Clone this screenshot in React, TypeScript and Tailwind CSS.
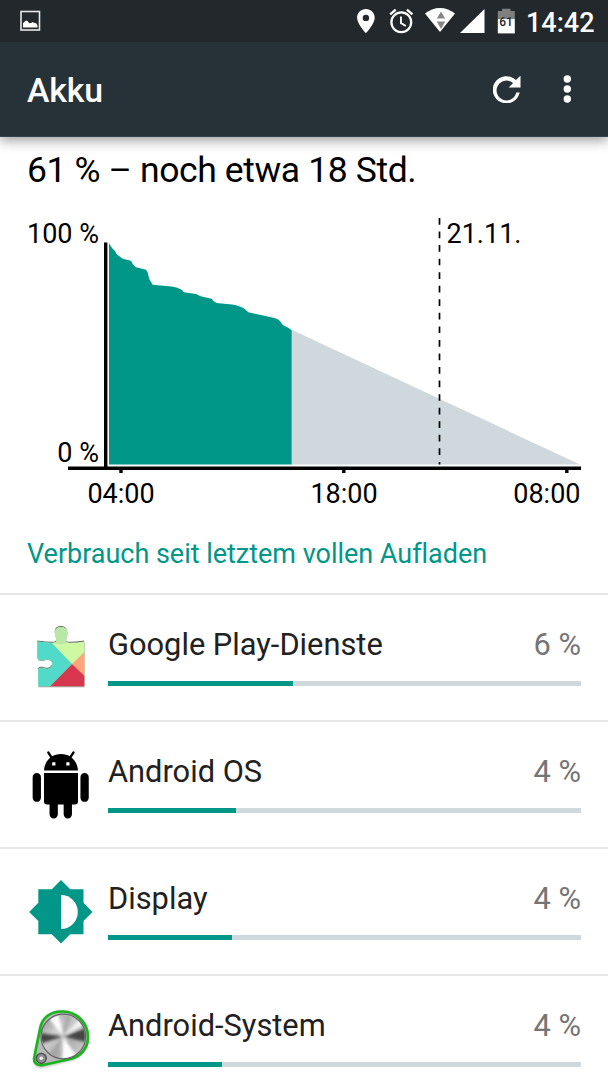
import type { ReactNode } from 'react';

interface UsageItem {
  name: string;
  percent: string;
  barWidth: number;
  icon: ReactNode;
}

const ImageIcon = () => (
  <svg viewBox="0 0 22 22" className="h-[22px] w-[22px]">
    <rect x="1" y="1.500" width="18.500" height="18.500" fill="none" stroke="#e8e8e8" strokeWidth="1.600" />
    <path d="M3 17.500v-4.500L6 10.500l1.500.6 1.800 2.200 1.700-.4 1.700-.9 1.600 1 1.900.3 1.300 2.200v2z" fill="#fff" />
  </svg>
);

const StatusIcons = () => (
  <svg viewBox="0 0 170 42" className="h-[42px] w-[170px]">
    <g fill="#fff">
      <path
        fillRule="evenodd"
        d="M15.900 9C11 9 7.100 12.900 7.100 17.800c0 6.300 8.800 15.400 8.800 15.400s8.800-9.100 8.800-15.400C24.700 12.900 20.800 9 15.900 9zm0 5.700a3.200 3.200 0 1 1 0 6.400 3.200 3.200 0 0 1 0-6.400z"
      />
      <path d="M75 13.600C79.400 10 84.500 8 90 8s10.600 2 15 5.600L90 32z" />
      <path d="M134.500 9v24h-24.500z" />
    </g>
    <g fill="none" stroke="#fff">
      <circle cx="51.300" cy="22.300" r="9.900" strokeWidth="2.300" />
      <path d="M51 16.500v6.600l4.800 2.900" strokeWidth="1.900" />
      <path d="M40.200 14.300l5.500-4.600M62.400 14.300l-5.500-4.600" strokeWidth="2.400" />
    </g>
    <path d="M91 11.500l4.200 7h-8.400zM91 29l-4.200-7.500h8.400z" fill="#858585" />
    <path d="M152 8.800h8.500V11h4.300v8h-17v-8h4.200z" fill="#7f7f7f" />
    <path d="M147.800 19h17v14.400h-17z" fill="#fff" />
    <text x="156" y="25.600" textAnchor="middle" fontSize="12" fontWeight="500" fill="#23282c">
      61
    </text>
  </svg>
);

const RefreshIcon = () => (
  <svg viewBox="0 0 28 28" className="h-7 w-7">
    <path
      d="M27.500.8v11.700H15.700l4.400-4.400a9.900 9.900 0 1 0 3.100 9.400h3.500A13.600 13.600 0 1 1 22.900 5.100z"
      fill="#fff"
    />
  </svg>
);

const PUZZLE =
  'M17.500 31q8.500 1.300 15 1.300c4 0 4.500-2 3.500-5-.8-2.500-1.200-4-1-6C35.300 18 37.500 16.500 41 16.500s5.800 1.500 6.300 4.800c.2 2-.2 3.500-1 6-1 3-.5 5 3.500 5q6.500 0 14.500-1.300V76H18.300V58.500c3-2.500 5-.8 8-.2 3.500 0 6-1.800 6-4.600s-2-5-5.500-5c-3 .6-5 2-8 .5-2-1-1.300-4-1.300-8z';

const PlayServicesIcon = () => (
  <svg viewBox="0 .5 90 90" className="h-[90px] w-[90px]">
    <defs>
      <clipPath id="puzzle">
        <path d={PUZZLE} />
      </clipPath>
    </defs>
    <path d={PUZZLE} fill="#666" transform="translate(-.2 -1)" />
    <path d={PUZZLE} fill="#999" transform="translate(.2 .8)" />
    <g clipPath="url(#puzzle)">
      <path d="M15 15h52v65H15z" fill="#cef9a2" />
      <path d="M34 15h15v17l-8 2-8-2z" fill="#b7e8a5" />
      <path d="M15 28h12.500L52 53.400 29.500 77H15z" fill="#51dac9" />
      <path d="M52 53.400L66 40v28z" fill="#ffa57b" />
      <path d="M52 53.400L66 67v10H29z" fill="#d7364f" />
    </g>
  </svg>
);

const AndroidIcon = () => (
  <svg viewBox="0 -2 90 90" className="h-[90px] w-[90px]">
    <path
      d="M24 30.500C24.500 21 31.500 14 41 14s16.500 7 17 16.500zM24 33h34v28.500a3 3 0 0 1-3 3H27a3 3 0 0 1-3-3z"
      fill="#000"
    />
    <g stroke="#000" strokeLinecap="round">
      <path d="M28.300 12.500l3.500 5.300M53.500 12.500L50 17.800" strokeWidth="2.300" />
      <path d="M16.800 37.200v20.500M64.600 37.200v20.500M33.700 60v14.300M47.800 60v14.300" strokeWidth="8.300" />
    </g>
    <path d="M32.200 22.200h3.200v3.200h-3.200zM46.300 22.200h3.200v3.200h-3.200z" fill="#fff" />
  </svg>
);

const DisplayIcon = () => (
  <svg viewBox="0 0 90 90" className="h-[90px] w-[90px]">
    <path
      d="M41 15l9.200 9.200h13.300v13.500L72.500 47l-9 9v13.300H50.200L41 78.500l-9.200-9.200H18.300V56L9.200 47l9.100-9.300V24.200h13.500z"
      fill="#009688"
    />
    <path d="M41 30c9.500 0 16.800 7.600 16.800 17S50.500 64 41 64z" fill="#fff" />
  </svg>
);

const SystemIcon = () => (
  <svg viewBox="0 -3 90 90" className="h-[90px] w-[90px]">
    <defs>
      <linearGradient id="steel" x1="0" y1="0" x2="1" y2="1">
        <stop offset="0" stopColor="#888" />
        <stop offset=".35" stopColor="#d0d0d0" />
        <stop offset=".65" stopColor="#b0b0b0" />
        <stop offset="1" stopColor="#d5d5d5" />
      </linearGradient>
      <filter id="soft" x="-20%" y="-20%" width="140%" height="140%">
        <feGaussianBlur stdDeviation="1.800" />
      </filter>
      <filter id="sheen" x="-20%" y="-20%" width="140%" height="140%">
        <feGaussianBlur stdDeviation="1.800" />
      </filter>
      <clipPath id="dial">
        <circle cx="43.300" cy="41.500" r="21.500" />
      </clipPath>
    </defs>
    <path
      d="M20.500 33C23 22 31 16 42 16a25.500 25.500 0 0 1 26 26c0 12-8 22-20 24l-25 6c-7 1-10-3-8.500-9z"
      fill="#666"
      opacity=".6"
      filter="url(#soft)"
    />
    <path
      d="M20.300 32.500C22.800 22 31 16.500 42 16.500a25.500 25.500 0 0 1 26 25.500c0 12-8 20.500-20 22.500L23 70c-7 1-10-3-8.500-9z"
      fill="#b8b8b8"
      stroke="#18b51c"
      strokeWidth="2.700"
    />
    <circle cx="43.300" cy="41.500" r="22.300" fill="url(#steel)" stroke="#646464" strokeWidth="1.200" />
    <g clipPath="url(#dial)">
      <g filter="url(#sheen)">
        <path d="M43 41.500L20 38v11zM43 41.500l25-9v15z" fill="#444" />
        <path d="M43 41.500L28 22l10-5zM43 41.500l-1 27 16-5z" fill="#fff" />
        <path d="M43 41.500L60 23l4 7z" fill="#f2f2f2" />
        <path d="M43 41.500L44 16l10 3zM43 41.500L28 60l7 5z" fill="#999" opacity=".6" />
      </g>
    </g>
    <circle cx="21.300" cy="63.300" r="5" fill="#8c8c8c" stroke="#4a4a4a" strokeWidth="1.300" />
    <circle cx="21.300" cy="63.300" r="1.800" fill="#eee" />
  </svg>
);

const items: UsageItem[] = [
  { name: 'Google Play-Dienste', percent: '6 %', barWidth: 185, icon: <PlayServicesIcon /> },
  { name: 'Android OS', percent: '4 %', barWidth: 128, icon: <AndroidIcon /> },
  { name: 'Display', percent: '4 %', barWidth: 123.500, icon: <DisplayIcon /> },
  { name: 'Android-System', percent: '4 %', barWidth: 114, icon: <SystemIcon /> },
];

const BatteryChart = () => (
  <svg viewBox="0 205 608 310" className="block h-[310px] w-full" fontSize="27">
    <path d="M291.700 329.800L580 464.600H291.700z" fill="#cfd8dc" />
    <path
      d="M109 464.600V243.300L112 248 115 251 116.700 254.300 122.700 258.700 131 260.700 133 264.500 136 267.300 146 269.700 147.500 272 149.300 279 152.700 284.700 171.700 286.500Q178 287.300 181.700 289.700L184 292.300 196 294 200.700 296.300 211.700 298.700 213.500 301 216.500 303 232 304.500Q241 306 245 309.300L248.300 312.300 273.300 317.700Q278 318.800 280 321L282.700 325 288.300 327.700 291.700 330.300V464.600z"
      fill="#009688"
    />
    <path d="M439.500 218v246.600" stroke="#000" strokeWidth="1.700" strokeDasharray="6.700 6.850" />
    <path
      d="M104 242.500h3.400V466.500h473.600v3.400h-12.500v3h-3.400v-3H345.500v3h-3.400v-3H122.700v3h-3.400v-3H68v-3.400h36z"
      fill="#000"
    />
    <g fill="#000">
      <text x="99" y="242.500" textAnchor="end">100 %</text>
      <text x="99" y="461.500" textAnchor="end">0 %</text>
      <text x="446.500" y="242.500">21.11.</text>
      <text x="121" y="503" textAnchor="middle">04:00</text>
      <text x="344" y="503" textAnchor="middle">18:00</text>
      <text x="580.500" y="503" textAnchor="end">08:00</text>
    </g>
  </svg>
);

const UsageRow = ({ name, percent, barWidth, icon }: UsageItem) => (
  <li className="flex h-[127px] border-t-2 border-[#e7e7e7] pl-5">
    <div className="mt-4 w-[88px] shrink-0">{icon}</div>
    <div className="w-[473px] pt-[31px]">
      <div className="flex justify-between text-[30.800px] leading-[38px]">
        <span className="text-[#212121]">{name}</span>
        <span className="text-[#757575]">{percent}</span>
      </div>
      <div className="mt-[17px] h-[5px] bg-[#cfd8dc]">
        <div className="h-full bg-[#009688]" style={{ width: barWidth }} />
      </div>
    </div>
  </li>
);

const App = () => (
  <div className="h-[1080px] w-[608px] overflow-hidden bg-white font-['Roboto',sans-serif] [font-variant-ligatures:none]">
    <header className="relative bg-[#263238] text-white shadow-[0_3px_12px_rgba(0,0,0,0.42)]">
      <div className="flex h-[42px] items-center bg-[#23282c] pl-5">
        <ImageIcon />
        <div className="ml-[308px]">
          <StatusIcons />
        </div>
        <span className="ml-[6px] pt-1 text-[27px] leading-[42px] font-medium">14:42</span>
      </div>
      <div className="flex h-[94px] items-center border-b border-[#37444b] pl-[27px] box-content">
        <h1 className="flex-1 pt-1 text-[33.800px] font-medium tracking-[-0.1px]">Akku</h1>
        <RefreshIcon />
        <svg viewBox="0 0 8 28" className="mr-[37px] ml-[42px] h-7 w-2" fill="#fff">
          <circle cx="4.300" cy="4" r="3.700" />
          <circle cx="4.300" cy="14" r="3.700" />
          <circle cx="4.300" cy="24" r="3.700" />
        </svg>
      </div>
    </header>

    <main>
      <p className="h-[68px] pt-3 pl-[27px] text-[35.500px] leading-[42px] tracking-[-0.38px] text-black">
        61 % – noch etwa 18 Std.
      </p>
      <BatteryChart />
      <h2 className="h-[78px] pt-[22px] pl-[27px] text-[27px] leading-[34px] tracking-[-0.02px] text-[#009688]">
        Verbrauch seit letztem vollen Aufladen
      </h2>
      <ul>
        {items.map((item) => (
          <UsageRow key={item.name} {...item} />
        ))}
      </ul>
    </main>
  </div>
);

export default App;
